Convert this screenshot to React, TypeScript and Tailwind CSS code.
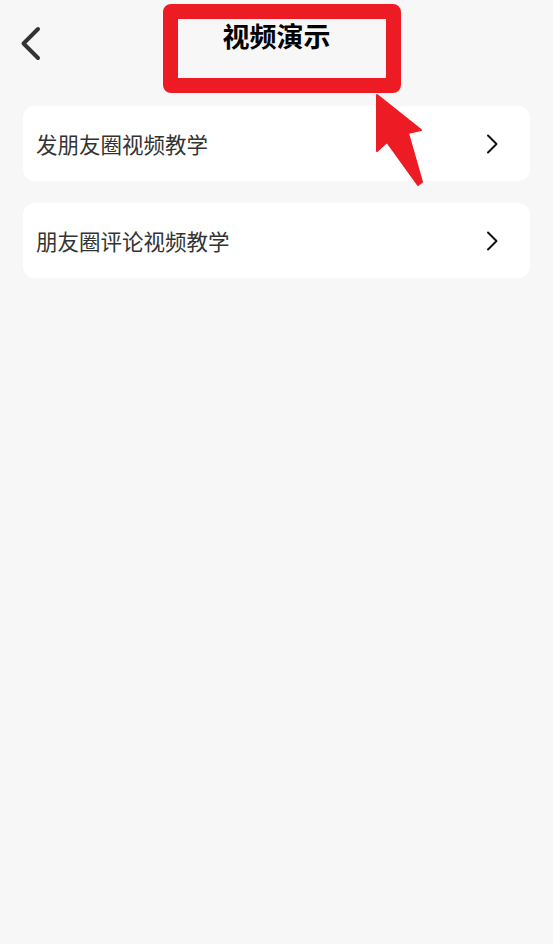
import React from "react";

const items = ["发朋友圈视频教学", "朋友圈评论视频教学"];

const ChevronRight = () => (
  <svg width="14" height="22" viewBox="0 0 14 22" fill="none">
    <path d="M2 2.5L10.5 11L2 19.5" stroke="#111" strokeWidth="2" strokeLinecap="round" strokeLinejoin="round" />
  </svg>
);

const App = () => {
  return (
    <main
      className="relative min-h-screen w-full bg-[#f7f7f7]"
      style={{ fontFamily: '"Noto Sans CJK SC", "Noto Sans", sans-serif' }}
    >
      {/* Header */}
      <header className="grid h-[106px] grid-cols-[70px_1fr_70px]">
        <button className="ml-[18px] mt-[26px] h-[36px] w-[24px]" aria-label="返回">
          <svg width="24" height="36" viewBox="0 0 24 36" fill="none">
            <path d="M20 3L5.5 17.5L20 32" stroke="#333" strokeWidth="4" strokeLinecap="round" strokeLinejoin="round" />
          </svg>
        </button>
        <h1 className="pt-[21px] text-center text-[27px] font-bold leading-[30px] text-black">视频演示</h1>
        <div />
      </header>

      {/* List */}
      <div className="flex flex-col gap-[22px] px-[23px]">
        {items.map((title) => (
          <div
            key={title}
            className="flex h-[75px] items-center justify-between rounded-[12px] bg-white pl-[13px] pr-[30px]"
          >
            <span className="text-[21.5px] leading-none text-[#333]">{title}</span>
            <ChevronRight />
          </div>
        ))}
      </div>

      {/* Annotation overlay */}
      <div className="pointer-events-none absolute left-[163px] top-[4px] h-[89px] w-[238px] rounded-[8px] border-[15px] border-[#ed1c24]" />
      <svg
        className="pointer-events-none absolute left-[370px] top-[90px]"
        width="60"
        height="100"
        viewBox="0 0 60 100"
      >
        <polygon
          points="7,5 51,40 38,43 52,92 48,95 17,52 7,61"
          fill="#ed1c24"
          stroke="#ed1c24"
          strokeWidth="2"
          strokeLinejoin="round"
        />
      </svg>
    </main>
  );
};

export default App;
